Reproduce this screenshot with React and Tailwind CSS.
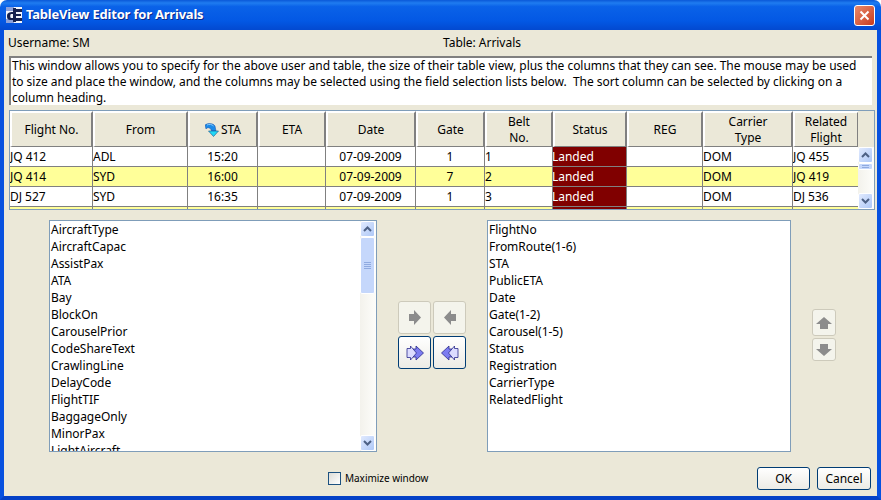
const font = "[font-family:'Noto_Sans',sans-serif]"

const columns = ['Flight No.', 'From', 'STA', 'ETA', 'Date', 'Gate', 'Belt No.', 'Status', 'REG', 'Carrier Type', 'Related Flight']

const flights = [
    { no: 'JQ 412', from: 'ADL', sta: '15:20', gate: '1', belt: '1', related: 'JQ 455' },
    { no: 'JQ 414', from: 'SYD', sta: '16:00', gate: '7', belt: '2', related: 'JQ 419', alt: true },
    { no: 'DJ 527', from: 'SYD', sta: '16:35', gate: '1', belt: '3', related: 'DJ 536' },
]

const available = ['AircraftType', 'AircraftCapac', 'AssistPax', 'ATA', 'Bay', 'BlockOn', 'CarouselPrior', 'CodeShareText', 'CrawlingLine', 'DelayCode', 'FlightTIF', 'BaggageOnly', 'MinorPax', 'LightAircraft']
const selected = ['FlightNo', 'FromRoute(1-6)', 'STA', 'PublicETA', 'Date', 'Gate(1-2)', 'Carousel(1-5)', 'Status', 'Registration', 'CarrierType', 'RelatedFlight']

const gridCols = 'grid grid-cols-[83px_95px_70px_68px_90px_69px_68px_74px_76px_90px_66px]'

const ScrollButton = ({ down }) => (
    <div className="w-[15px] h-[16px] shrink-0 rounded-[2px] border border-white bg-gradient-to-br from-[#e1eafe] to-[#aec8f7] flex items-center justify-center">
        <svg width="9" height="6" viewBox="0 0 9 6">
            <path d={down ? 'M1 1 L4.5 4.5 L8 1' : 'M1 5 L4.5 1.5 L8 5'} fill="none" stroke="#4d6185" strokeWidth="2" />
        </svg>
    </div>
)

const GripLines = () => (
    <div className="flex flex-col gap-px">
        <div className="w-[7px] h-px bg-[#8faae0]" />
        <div className="w-[7px] h-px bg-[#8faae0]" />
        <div className="w-[7px] h-px bg-[#8faae0]" />
        <div className="w-[7px] h-px bg-[#8faae0]" />
    </div>
)

const SortIcon = () => (
    <svg className="mr-[2px] shrink-0" width="14" height="14" viewBox="0 0 14 14">
        <path d="M0 2 C3 0 8 0 10 3 L11 8 L6.5 8 C6 5 3 3.5 1 6 Z" fill="#1a8ae8" stroke="#1a4fa8" strokeWidth="0.5" />
        <path d="M3.5 8 L13.5 8 L8.5 13.5 Z" fill="#22d8f5" stroke="#14508c" strokeWidth="0.6" />
        <path d="M2 2 C4 1 7 1.2 8.5 3" fill="none" stroke="#8ccaf8" strokeWidth="1" />
    </svg>
)

const HeaderCell = ({ label }) => (
    <div className="h-[36px] bg-[#ebe8d8] border-t-2 border-l-2 border-t-white border-l-white border-r-2 border-b border-r-[#808080] border-b-[#808080] flex items-center justify-center text-center leading-[16px] text-black px-[12px]">
        {label === 'STA' && <SortIcon />}
        {label}
    </div>
)

const Cell = ({ children, center, className = '' }) => (
    <div className={`h-[20px] border-r border-b border-[#808080] leading-[19px] whitespace-nowrap overflow-hidden ${center ? 'text-center' : ''} ${className}`}>
        {children}
    </div>
)

const FlightRow = ({ flight }) => (
    <div className={`${gridCols} ${flight.alt ? 'bg-[#ffff99]' : 'bg-white'}`}>
        <Cell>{flight.no}</Cell>
        <Cell>{flight.from}</Cell>
        <Cell center>{flight.sta}</Cell>
        <Cell />
        <Cell center>{flight.date}</Cell>
        <Cell center>{flight.gate}</Cell>
        <Cell>{flight.belt}</Cell>
        <Cell className="bg-[#800000] text-white indent-[-1px]">{flight.status}</Cell>
        <Cell />
        <Cell>{flight.carrier}</Cell>
        <Cell>{flight.related}</Cell>
    </div>
)

const TableScrollbar = () => (
    <div className="w-[16px] h-[62px] mt-[36px] bg-gradient-to-r from-[#f3f2ec] to-[#fdfdfa] flex flex-col justify-between">
        <div className="flex flex-col">
            <ScrollButton />
            <div className="h-[7px] w-[15px] rounded-[2px] border border-white bg-[#c5d7fb] flex items-center justify-center overflow-hidden">
                <div className="w-[7px] h-[3px] border-y border-[#8faae0]" />
            </div>
        </div>
        <ScrollButton down />
    </div>
)

const ListBox = ({ items, className = '', scroll }) => (
    <div className={`relative h-[232px] bg-white border border-[#7f9db9] overflow-hidden flex ${className}`}>
        <div className="flex-1 pl-px">
            {items.map((item) => (
                <div key={item} className="h-[17px] leading-[17px] whitespace-nowrap">{item}</div>
            ))}
        </div>
        {scroll && (
            <div className="w-[16px] h-full bg-gradient-to-r from-[#f3f2ec] to-[#fdfdfa] flex flex-col justify-between">
                <div className="flex flex-col">
                    <ScrollButton />
                    <div className="h-[57px] w-[15px] rounded-[2px] border border-white bg-[#c5d7fb] flex items-center justify-center">
                        <GripLines />
                    </div>
                </div>
                <ScrollButton down />
            </div>
        )}
    </div>
)

const disabledBtn = 'rounded-[3px] border border-[#cdcabb] bg-[#f4f4ec] flex items-center justify-center'
const enabledBtn = 'rounded-[3px] border border-[#003c74] bg-gradient-to-b from-white to-[#ecebe5] flex items-center justify-center'

const Single = ({ flip }) => (
    <svg className={flip ? '-scale-x-100' : ''} width="12" height="15" viewBox="0 0 12 15">
        <path d="M0 4 H5 V0 L12 7.5 L5 15 V11 H0 Z" fill="#8c8c8c" />
    </svg>
)

const Double = ({ flip }) => (
    <svg className={flip ? '-scale-x-100' : ''} width="18" height="16" viewBox="0 0 18 16">
        <path d="M7 4 H10 V1 L17.5 8 L10 15 V12 H7 Z" fill="#7c7cf0" stroke="#2a2a8c" strokeWidth="0.8" />
        <path d="M1 3.5 H4.5 V1 L10.5 8 L4.5 15 V12.5 H1 Z" fill="#dcdcff" stroke="#2a2a8c" strokeWidth="0.8" />
    </svg>
)

const Vertical = ({ flip }) => (
    <svg className={flip ? 'rotate-180' : ''} width="16" height="12" viewBox="0 0 16 12">
        <path d="M8 0 L16 7 H12 V12 H4 V7 H0 Z" fill="#8c8c8c" />
    </svg>
)

const Logo = () => (
    <svg width="16" height="16" viewBox="0 0 16 16">
        <rect x="0" y="0" width="16" height="16" fill="#f2f5fb" />
        <path d="M0 1 H8 M0 3 H8 M0 13 H8 M0 15 H8" stroke="#2a4fb8" strokeWidth="1" />
        <path d="M1 9 C1 6 3 5 7 5 V7 H5 C4 7 4 11 5 11 H7 V13 H5 C2 13 1 12 1 9 Z" fill="#16224f" />
        <path d="M7 1 H10 V15 H7 Z" fill="#16224f" />
        <path d="M10 2 H16 V5 H10 Z M10 7 H15 V9 H10 Z M10 11 H16 V14 H10 Z" fill="#16224f" />
    </svg>
)

export default function App() {
    return (
        <div className={`w-[881px] h-[500px] flex flex-col overflow-hidden text-[12px] tracking-[-0.03px] text-black ${font}`}>
            <div className="h-[30px] shrink-0 rounded-t-[7px] bg-[linear-gradient(#0a58d8_0%,#1f7cf0_10%,#0a62e8_22%,#0358e4_70%,#0349d0_100%)] flex items-center pl-[6px] pr-[6px]">
                <Logo />
                <span className="ml-[4px] text-white font-bold text-[13px] tracking-[-0.2px] [text-shadow:1px_1px_#0a2a8a]">TableView Editor for Arrivals</span>
                <div className="ml-auto w-[21px] h-[21px] rounded-[3px] border border-white bg-gradient-to-br from-[#e8886a] to-[#c8391a] flex items-center justify-center">
                    <svg width="11" height="11" viewBox="0 0 11 11">
                        <path d="M1.5 1.5 L9.5 9.5 M9.5 1.5 L1.5 9.5" stroke="#fff" strokeWidth="2" />
                    </svg>
                </div>
            </div>

            <div className="flex-1 min-h-0 flex flex-col bg-[#ebe8d8] border-x-4 border-b-4 border-x-[#0751df] border-b-[#0441c7]">
                <div className="h-[26px] shrink-0 flex items-center pl-[4px] pb-[1px]">
                    <span className="w-[435px]">Username: SM</span>
                    <span>Table: Arrivals</span>
                </div>

                <div className="h-[49px] shrink-0 ml-[5px] mr-[5px] bg-white border-t-2 border-l-2 border-[#808080] pl-px pr-[10px] leading-[16px]">
                    This window allows you to specify for the above user and table, the size of their table view, plus the columns that they can see. The mouse may be used to size and place the window, and the columns may be selected using the field selection lists below.&nbsp; The sort column can be selected by clicking on a column heading.
                </div>

                <div className="h-[100px] shrink-0 mt-[5px] ml-[5px] mr-[2px] border border-[#7f9db9] flex overflow-hidden">
                    <div className="flex-1 min-w-0 overflow-hidden">
                        <div className={gridCols}>
                            {columns.map((c) => (
                                <HeaderCell key={c} label={c} />
                            ))}
                        </div>
                        {flights.map((f) => (
                            <FlightRow key={f.no} flight={{ ...f, date: '07-09-2009', status: 'Landed', carrier: 'DOM' }} />
                        ))}
                        <FlightRow flight={{ alt: true }} />
                    </div>
                    <TableScrollbar />
                </div>

                <div className="h-[232px] shrink-0 mt-[10px] flex">
                    <ListBox items={available} scroll className="w-[328px] ml-[45px]" />
                    <div className="w-[110px] shrink-0 flex flex-col items-center gap-[2px] pt-[81px]">
                        <div className="flex gap-[2px]">
                            <div className={`w-[33px] h-[33px] ${disabledBtn}`}><Single /></div>
                            <div className={`w-[33px] h-[33px] ${disabledBtn}`}><Single flip /></div>
                        </div>
                        <div className="flex gap-[2px]">
                            <div className={`w-[33px] h-[33px] ${enabledBtn}`}><Double /></div>
                            <div className={`w-[33px] h-[33px] ${enabledBtn}`}><Double flip /></div>
                        </div>
                    </div>
                    <ListBox items={selected} className="w-[304px]" />
                    <div className="flex flex-col gap-[2px] pt-[89px] ml-[21px]">
                        <div className={`w-[24px] h-[27px] ${disabledBtn}`}><Vertical /></div>
                        <div className={`w-[24px] h-[23px] ${disabledBtn}`}><Vertical flip /></div>
                    </div>
                </div>

                <div className="flex-1 flex items-start">
                    <div className="flex items-center mt-[19px] ml-[324px]">
                        <div className="w-[13px] h-[13px] border border-[#1c5180] bg-gradient-to-br from-[#dcdcd7] to-white" />
                        <span className="ml-[4px] text-[10px]">Maximize window</span>
                    </div>
                    <div className="ml-auto flex gap-[7px] mt-[15px] mr-[6px]">
                        <div className={`w-[53px] h-[23px] ${enabledBtn}`}>OK</div>
                        <div className={`w-[54px] h-[23px] ${enabledBtn}`}>Cancel</div>
                    </div>
                </div>
            </div>
        </div>
    )
}
